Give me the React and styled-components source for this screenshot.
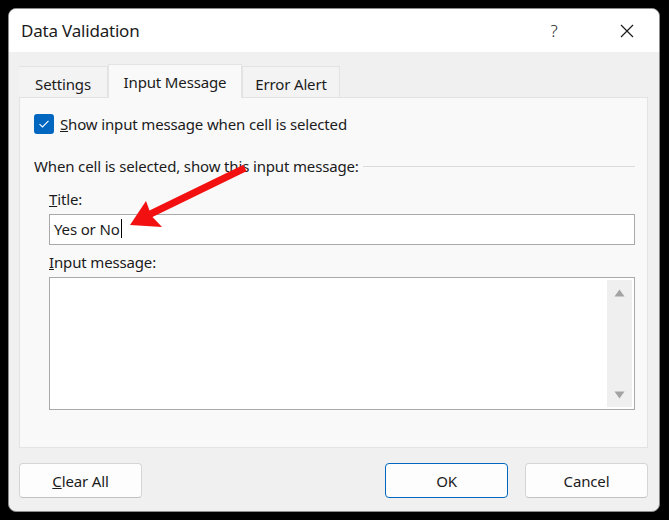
import React from "react"
import styled, { createGlobalStyle } from "styled-components"

const GlobalStyle = createGlobalStyle`
  html, body {
    margin: 0;
    background: #000;
  }
  body {
    font-family: "Noto Sans", "Open Sans", sans-serif;
    color: #1b1b1b;
    letter-spacing: -0.15px;
  }
`

const Screen = styled.div`
  position: relative;
  width: 669px;
  height: 520px;
  padding: 8px 9px 8px 8px;
  box-sizing: border-box;
`

const Dialog = styled.div`
  width: 652px;
  height: 504px;
  box-sizing: border-box;
  border: 1px solid #8c8c8c;
  border-radius: 8px;
  overflow: hidden;
  background: #f0f0f0;
  display: flex;
  flex-direction: column;
`

const TitleBar = styled.div`
  height: 43px;
  flex: none;
  background: #fff;
  display: flex;
  align-items: center;
  padding-left: 12px;
`

const Title = styled.div`
  flex: 1;
  font-size: 17px;
  letter-spacing: -0.2px;
`

const HelpGlyph = styled.div`
  width: 24px;
  text-align: center;
  font-size: 17px;
  font-weight: 300;
  margin-right: 46px;
`

const CloseButton = styled.div`
  width: 30px;
  display: flex;
  justify-content: center;
  margin-right: 17px;
`

const Body = styled.div`
  flex: 1;
  display: flex;
  flex-direction: column;
  padding: 11px 11px 0 10px;
`

const TabRow = styled.div`
  display: flex;
  align-items: flex-end;
  height: 34px;
`

const Tab = styled.div`
  width: ${(p) => p.$w}px;
  height: ${(p) => (p.$active ? "34px" : "31px")};
  box-sizing: border-box;
  display: flex;
  align-items: center;
  justify-content: center;
  font-size: 15px;
  background: ${(p) => (p.$active ? "#f9f9f9" : "#f3f3f3")};
  border: 1px solid #e3e3e3;
  border-bottom: none;
  border-left: ${(p) => (p.$first ? "none" : "1px solid #e3e3e3")};
  padding-top: ${(p) => (p.$active ? "0" : "3px")};
  margin-bottom: ${(p) => (p.$active ? "-1px" : "0")};
  position: relative;
  z-index: ${(p) => (p.$active ? 2 : 1)};
`

const Panel = styled.div`
  height: 351px;
  box-sizing: border-box;
  background: #f9f9f9;
  border: 1px solid #e3e3e3;
  padding: 16px 12px 0 14px;
  display: flex;
  flex-direction: column;
`

const CheckRow = styled.label`
  display: flex;
  align-items: center;
  gap: 6px;
  font-size: 15px;
  height: 20px;
`

const Checkbox = styled.span`
  width: 20px;
  height: 20px;
  border-radius: 3px;
  background: #0067c0;
  display: flex;
  align-items: center;
  justify-content: center;
`

const GroupHeading = styled.div`
  display: flex;
  align-items: center;
  gap: 4px;
  margin-top: 22px;
  height: 20px;
  font-size: 15px;
  white-space: nowrap;

  &::after {
    content: "";
    flex: 1;
    height: 1px;
    background: #dcdcdc;
  }
`

const Indented = styled.div`
  padding-left: 15px;
  display: flex;
  flex-direction: column;
`

const FieldLabel = styled.div`
  font-size: 15px;
  height: 20px;
  display: flex;
  align-items: center;
  margin-top: ${(p) => p.$top}px;
  margin-bottom: 5px;
`

const TextBox = styled.div`
  height: 31px;
  box-sizing: border-box;
  background: #fff;
  border: 1px solid #a9a9a9;
  display: flex;
  align-items: center;
  padding: 0 0 2px 4px;
  font-size: 15px;
`

const Caret = styled.span`
  display: inline-block;
  width: 1px;
  height: 19px;
  background: #000;
  margin-left: 1px;
`

const TextArea = styled.div`
  height: 133px;
  box-sizing: border-box;
  background: #fff;
  border: 1px solid #a9a9a9;
  display: flex;
  justify-content: flex-end;
  padding: 2px 2px 2px 0;
`

const ScrollTrack = styled.div`
  width: 25px;
  background: #efefef;
  display: flex;
  flex-direction: column;
  justify-content: space-between;
  align-items: center;
  padding: 9px 0 8px;
  box-sizing: border-box;
`

const Footer = styled.div`
  display: flex;
  justify-content: space-between;
  margin-top: 15px;
`

const ButtonGroup = styled.div`
  display: flex;
  gap: 17px;
`

const Button = styled.button`
  width: 123px;
  height: 35px;
  font-family: inherit;
  font-size: 15px;
  letter-spacing: inherit;
  color: #1b1b1b;
  background: #fdfdfd;
  border: 1px solid ${(p) => (p.$primary ? "#0067c0" : "#d5d5d5")};
  border-bottom-color: ${(p) => (p.$primary ? "#0067c0" : "#c2c2c2")};
  border-radius: 4px;
  padding: 0;
`

const ArrowLayer = styled.svg`
  position: absolute;
  left: 0;
  top: 0;
  pointer-events: none;
`

export default function App() {
  return (
    <Screen>
      <GlobalStyle />
      <Dialog>
        <TitleBar>
          <Title>Data Validation</Title>
          <HelpGlyph>?</HelpGlyph>
          <CloseButton>
            <svg width="14" height="14" viewBox="0 0 14 14">
              <path d="M1 1 L13 13 M13 1 L1 13" stroke="#1b1b1b" strokeWidth="1.2" />
            </svg>
          </CloseButton>
        </TitleBar>
        <Body>
          <TabRow>
            <Tab $first $w={89}>Settings</Tab>
            <Tab $active $w={134}>Input Message</Tab>
            <Tab $w={98}>Error Alert</Tab>
          </TabRow>
          <Panel>
            <CheckRow>
              <Checkbox>
                <svg width="12" height="10" viewBox="0 0 12 10">
                  <path d="M1.5 5.2 L4.5 8 L10.5 1.8" fill="none" stroke="#fff" strokeWidth="1.1" />
                </svg>
              </Checkbox>
              <span><u>S</u>how input message when cell is selected</span>
            </CheckRow>
            <GroupHeading>When cell is selected, show this input message:</GroupHeading>
            <Indented>
              <FieldLabel $top={13}><span><u>T</u>itle:</span></FieldLabel>
              <TextBox>Yes or No<Caret /></TextBox>
              <FieldLabel $top={7}><span><u>I</u>nput message:</span></FieldLabel>
              <TextArea>
                <ScrollTrack>
                  <svg width="11" height="8" viewBox="0 0 11 8">
                    <path d="M5.5 0.5 L10.5 7.5 L0.5 7.5 Z" fill="#a3a3a3" />
                  </svg>
                  <svg width="11" height="8" viewBox="0 0 11 8">
                    <path d="M0.5 0.5 L10.5 0.5 L5.5 7.5 Z" fill="#a3a3a3" />
                  </svg>
                </ScrollTrack>
              </TextArea>
            </Indented>
          </Panel>
          <Footer>
            <Button><u>C</u>lear All</Button>
            <ButtonGroup>
              <Button $primary>OK</Button>
              <Button>Cancel</Button>
            </ButtonGroup>
          </Footer>
        </Body>
      </Dialog>
      <ArrowLayer width="669" height="520" viewBox="0 0 669 520">
        <path
          d="M130 225 L146 201 L149.5 210.5 L243.5 164.8 L246.5 171.2 L152.5 217 L162 227 Z"
          fill="#f21010"
        />
      </ArrowLayer>
    </Screen>
  )
}
